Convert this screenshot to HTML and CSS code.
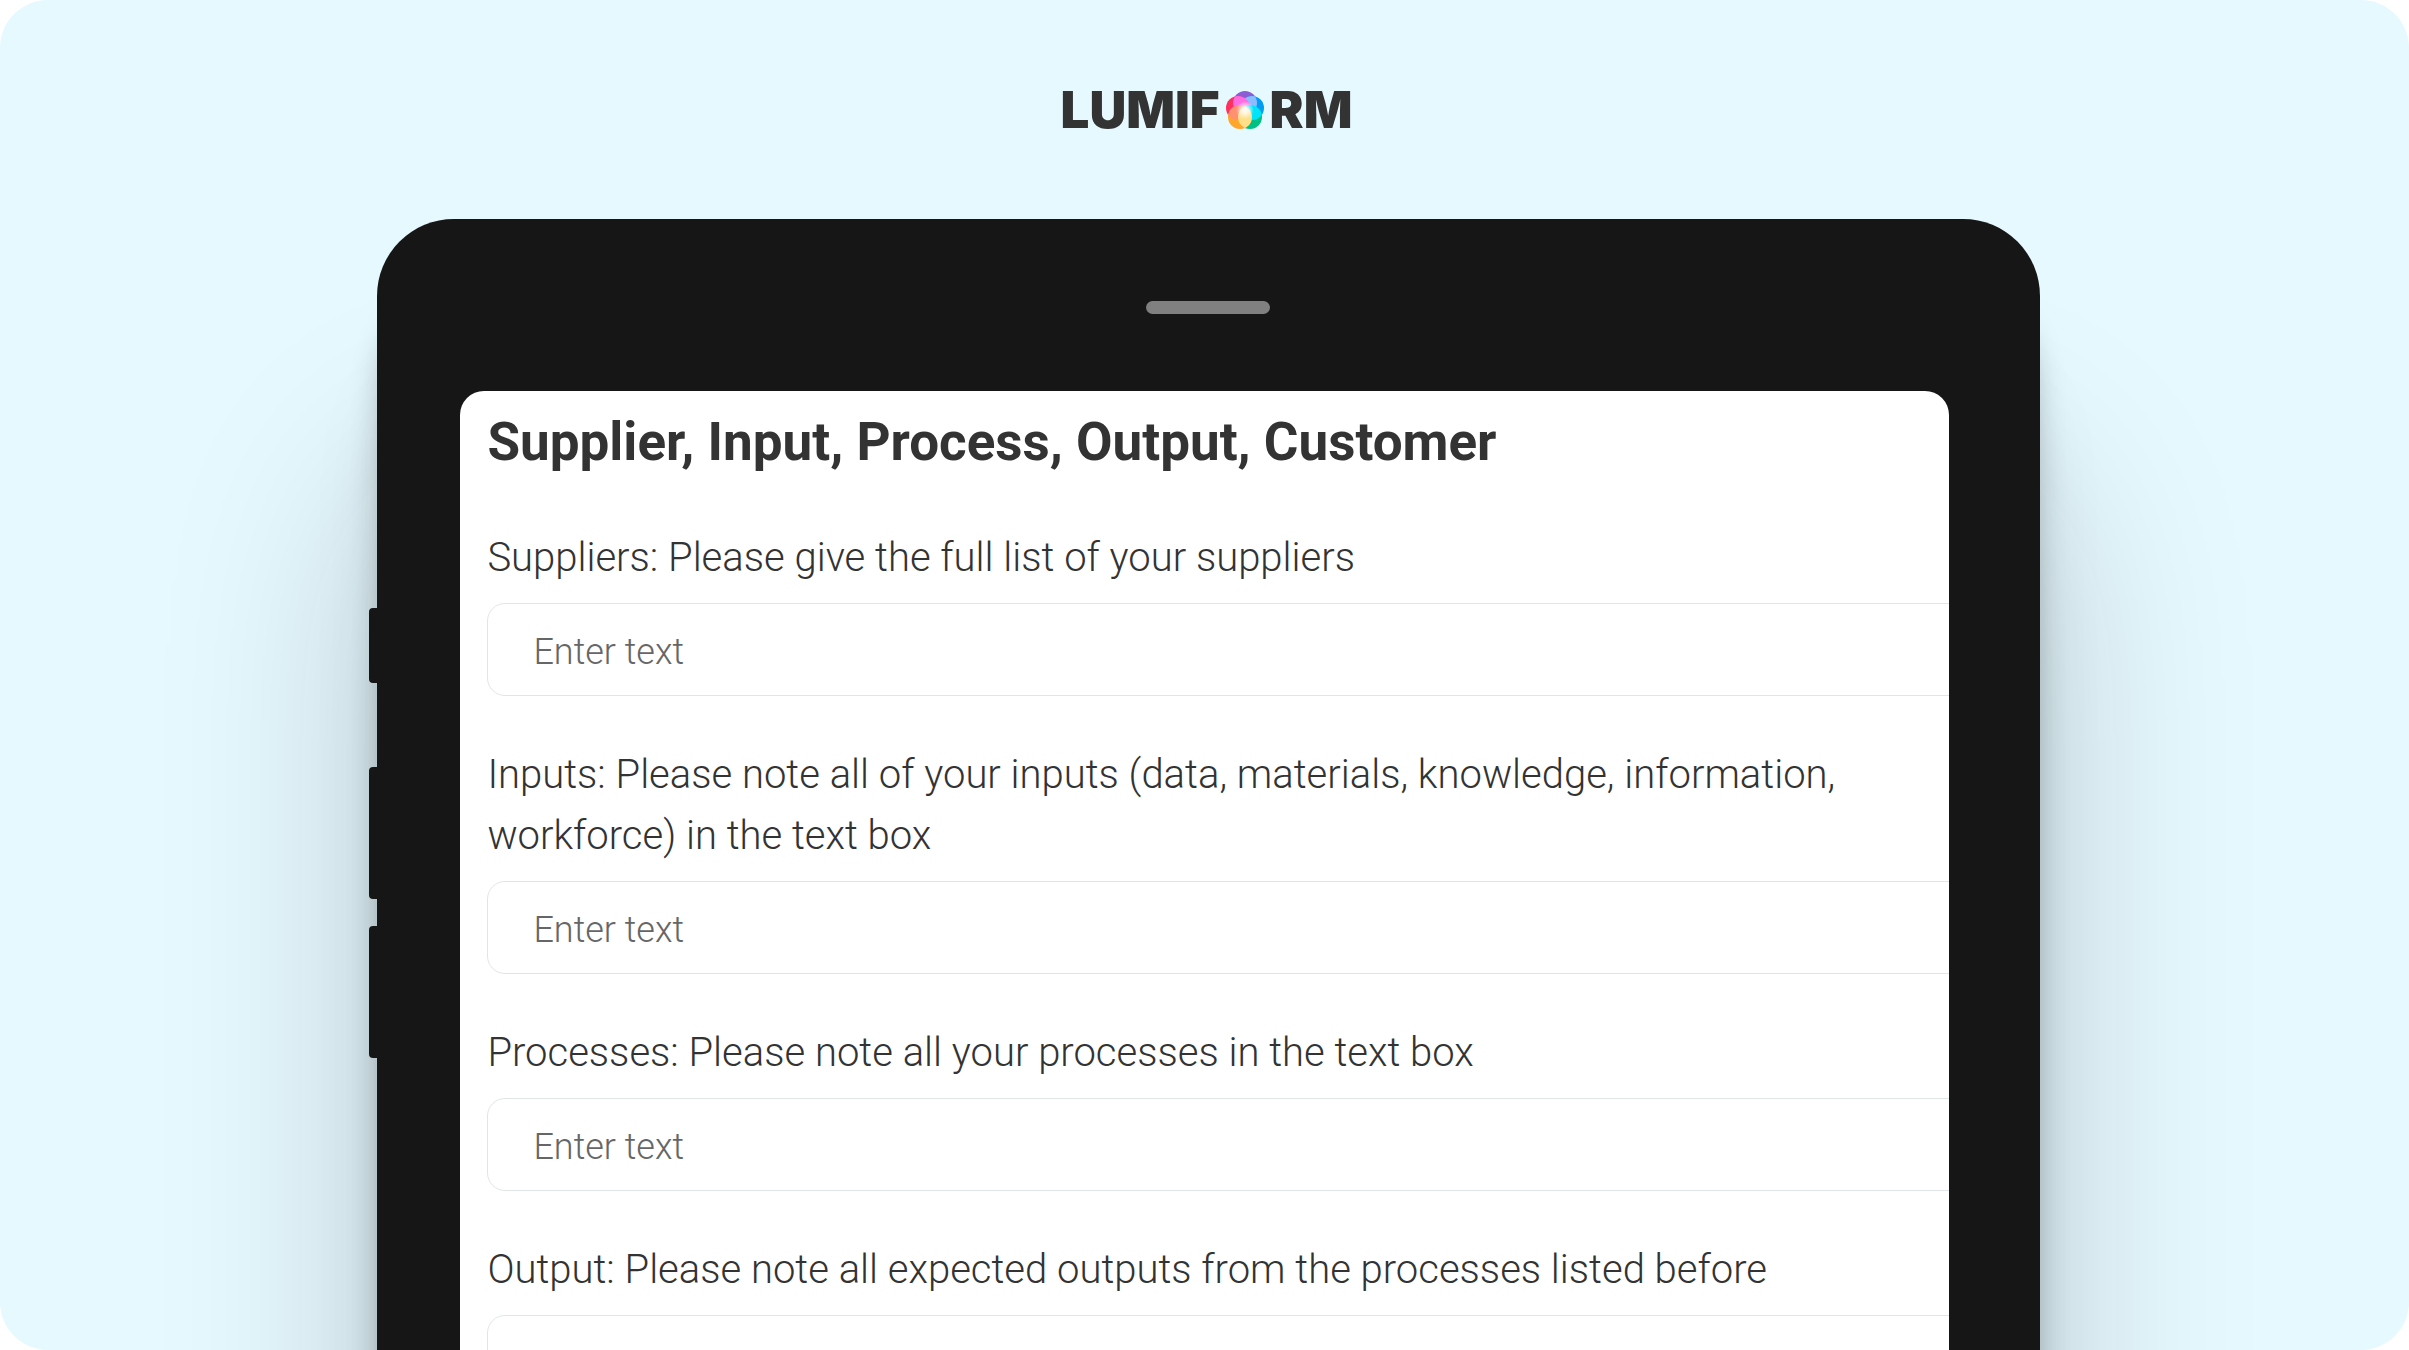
FILE: index.html
```html
<!DOCTYPE html>
<html lang="en">
<head>
<meta charset="utf-8">
<title>Lumiform</title>
<link rel="stylesheet" href="styles.css">
</head>
<body>
<main class="stage">
  <header class="brand" aria-label="Lumiform">
    <span>LUMIF</span>
    <svg class="brand-mark" viewBox="0 0 38 38" aria-hidden="true">
      <defs>
        <clipPath id="top"><circle cx="19" cy="12" r="12"/></clipPath>
        <clipPath id="right"><circle cx="26" cy="17" r="12"/></clipPath>
        <clipPath id="low-left"><circle cx="14" cy="26" r="12"/></clipPath>
        <clipPath id="left"><circle cx="12" cy="17" r="12"/></clipPath>
        <radialGradient id="glow"><stop offset="0" stop-color="#fff"/><stop offset=".5" stop-color="#fff" stop-opacity=".6"/><stop offset="1" stop-color="#fff" stop-opacity="0"/></radialGradient>
      </defs>
      <circle cx="19" cy="12" r="12" fill="#8b5fd3"/>
      <circle cx="26" cy="17" r="12" fill="#009df5"/>
      <circle cx="24" cy="26" r="12" fill="#00c083"/>
      <circle cx="12" cy="17" r="12" fill="#ff2f5f"/>
      <circle cx="14" cy="26" r="12" fill="#ffa62b"/>
      <circle cx="26" cy="17" r="12" fill="#8cbcff" clip-path="url(#top)"/>
      <circle cx="12" cy="17" r="12" fill="#ff6be0" clip-path="url(#top)"/>
      <circle cx="24" cy="26" r="12" fill="#00e4fa" clip-path="url(#right)"/>
      <circle cx="14" cy="26" r="12" fill="#ff9070" clip-path="url(#left)"/>
      <circle cx="24" cy="26" r="12" fill="#ffe08a" clip-path="url(#low-left)"/>
      <circle cx="19" cy="19" r="9" fill="url(#glow)"/>
    </svg>
    <span>RM</span>
  </header>
  <section class="tablet">
    <div class="keys" aria-hidden="true"><i class="key key-short"></i><i class="key"></i><i class="key"></i></div>
    <div class="speaker" aria-hidden="true"></div>
    <form class="screen">
      <h1 class="title">Supplier, Input, Process, Output, Customer</h1>
      <div class="field">
        <label class="label" for="suppliers">Suppliers: Please give the full list of your suppliers</label>
        <input class="input" id="suppliers" type="text" placeholder="Enter text">
      </div>
      <div class="field">
        <label class="label" for="inputs">Inputs: Please note all of your inputs (data, materials, knowledge, information, workforce) in the text box</label>
        <input class="input" id="inputs" type="text" placeholder="Enter text">
      </div>
      <div class="field">
        <label class="label" for="processes">Processes: Please note all your processes in the text box</label>
        <input class="input" id="processes" type="text" placeholder="Enter text">
      </div>
      <div class="field">
        <label class="label" for="output">Output: Please note all expected outputs from the processes listed before</label>
        <input class="input" id="output" type="text" placeholder="Enter text">
      </div>
    </form>
  </section>
</main>
</body>
</html>
```
FILE: styles.css
```css
* { box-sizing: border-box; }

body {
  margin: 0;
  background: #fff;
  color: #333;
  font-family: Roboto, "Liberation Sans", sans-serif;
}

.stage {
  height: 100vh;
  overflow: hidden;
  display: flex;
  flex-direction: column;
  align-items: center;
  border-radius: 48px;
  background: #e6f9ff;
}

.brand {
  flex: none;
  height: 219px;
  padding-left: 4px;
  display: flex;
  align-items: center;
  gap: 6px;
  font: 900 51px/60px Inter, sans-serif;
}

.brand-mark { width: 38px; height: 38px; }

.tablet {
  flex: none;
  position: relative;
  width: 69%;
  padding-top: 82px;
  margin-left: 8px;
  display: flex;
  flex-direction: column;
  border-radius: 77px 77px 0 0;
  background: #161616;
  box-shadow:
    0 260px 220px rgba(22, 22, 22, .2),
    0 150px 90px -30px rgba(22, 22, 22, .18),
    0 80px 36px -14px rgba(22, 22, 22, .45);
}

.keys {
  position: absolute;
  top: 389px;
  left: -8px;
  display: grid;
}

.key {
  width: 16px;
  height: 132px;
  margin-bottom: 27px;
  border-radius: 4px;
  background: #161616;
}

.key-short { height: 75px; margin-bottom: 84px; }

.speaker {
  align-self: center;
  width: 124px;
  height: 13px;
  border-radius: 7px;
  background: #808080;
}

.screen {
  margin: 77px 91px 0 83px;
  padding: 21px 0 40px 27px;
  display: grid;
  gap: 48px;
  overflow: hidden;
  border-radius: 24px 24px 0 0;
  background: #fff;
}

.title {
  margin: 0 0 6px;
  font-size: 53px;
  line-height: 61px;
  font-weight: 700;
}

.field { display: grid; gap: 15px; }

.label {
  padding-right: 80px;
  font-size: 40px;
  line-height: 61px;
  font-weight: 300;
}

.input {
  width: calc(100% + 20px);
  height: 93px;
  padding: 4px 45px 0;
  border: 1px solid #e0e6e6;
  border-radius: 18px;
  background: #fff;
  color: #333;
  font: 300 36px/44px Roboto, sans-serif;
}

.input::placeholder { color: #666; opacity: 1; }
```
